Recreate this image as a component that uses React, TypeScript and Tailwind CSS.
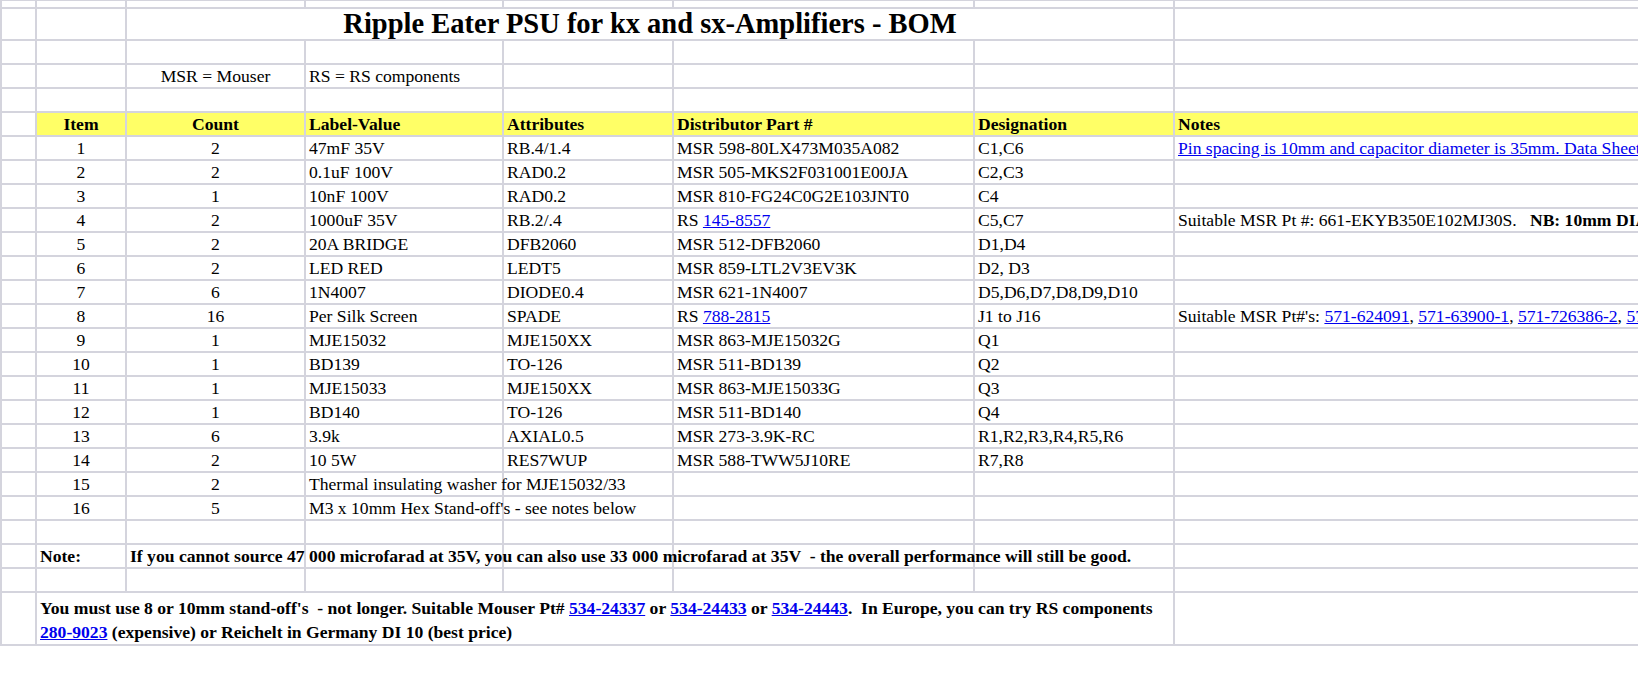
import React from 'react';

type Row = {
  item: string;
  count: string;
  label: string;
  attr?: string;
  part?: React.ReactNode;
  des?: string;
  notes?: React.ReactNode;
};

const A = ({ children }: { children: React.ReactNode }) => (
  <a href="#" className="text-[#0000ee] underline">
    {children}
  </a>
);

const rows: Row[] = [
  {
    item: '1',
    count: '2',
    label: '47mF 35V',
    attr: 'RB.4/1.4',
    part: 'MSR 598-80LX473M035A082',
    des: 'C1,C6',
    notes: <A>Pin spacing is 10mm and capacitor diameter is 35mm. Data Sheet here</A>,
  },
  { item: '2', count: '2', label: '0.1uF 100V', attr: 'RAD0.2', part: 'MSR 505-MKS2F031001E00JA', des: 'C2,C3' },
  { item: '3', count: '1', label: '10nF 100V', attr: 'RAD0.2', part: 'MSR 810-FG24C0G2E103JNT0', des: 'C4' },
  {
    item: '4',
    count: '2',
    label: '1000uF 35V',
    attr: 'RB.2/.4',
    part: (
      <>
        RS <A>145-8557</A>
      </>
    ),
    des: 'C5,C7',
    notes: (
      <>
        Suitable MSR Pt #: 661-EKYB350E102MJ30S.{'   '}
        <b>NB: 10mm DIAMETER</b>
      </>
    ),
  },
  { item: '5', count: '2', label: '20A BRIDGE', attr: 'DFB2060', part: 'MSR 512-DFB2060', des: 'D1,D4' },
  { item: '6', count: '2', label: 'LED RED', attr: 'LEDT5', part: 'MSR 859-LTL2V3EV3K', des: 'D2, D3' },
  { item: '7', count: '6', label: '1N4007', attr: 'DIODE0.4', part: 'MSR 621-1N4007', des: 'D5,D6,D7,D8,D9,D10' },
  {
    item: '8',
    count: '16',
    label: 'Per Silk Screen',
    attr: 'SPADE',
    part: (
      <>
        RS <A>788-2815</A>
      </>
    ),
    des: 'J1 to J16',
    notes: (
      <>
        Suitable MSR Pt#'s: <A>571-624091</A>, <A>571-63900-1</A>, <A>571-726386-2</A>, <A>571-726386-1</A>
      </>
    ),
  },
  { item: '9', count: '1', label: 'MJE15032', attr: 'MJE150XX', part: 'MSR 863-MJE15032G', des: 'Q1' },
  { item: '10', count: '1', label: 'BD139', attr: 'TO-126', part: 'MSR 511-BD139', des: 'Q2' },
  { item: '11', count: '1', label: 'MJE15033', attr: 'MJE150XX', part: 'MSR 863-MJE15033G', des: 'Q3' },
  { item: '12', count: '1', label: 'BD140', attr: 'TO-126', part: 'MSR 511-BD140', des: 'Q4' },
  { item: '13', count: '6', label: '3.9k', attr: 'AXIAL0.5', part: 'MSR 273-3.9K-RC', des: 'R1,R2,R3,R4,R5,R6' },
  { item: '14', count: '2', label: '10 5W', attr: 'RES7WUP', part: 'MSR 588-TWW5J10RE', des: 'R7,R8' },
  { item: '15', count: '2', label: 'Thermal insulating washer for MJE15032/33' },
  { item: '16', count: '5', label: "M3 x 10mm Hex Stand-off's - see notes below" },
];

const td = 'border-2 border-[#d4d4dd] px-[3px] py-0 whitespace-pre overflow-visible';
const hd = td + ' bg-[#ffff66] font-bold';

const App: React.FC = () => {
  return (
    <div className="w-full h-[673px] overflow-hidden bg-white">
      <table className="table-fixed border-collapse w-[1800px] -mt-[1px] text-[17.6px] leading-[20px] text-black font-['Liberation_Serif','Times_New_Roman',serif]">
        <colgroup>
          <col className="w-[35px]" />
          <col className="w-[90px]" />
          <col className="w-[179px]" />
          <col className="w-[198px]" />
          <col className="w-[170px]" />
          <col className="w-[301px]" />
          <col className="w-[200px]" />
          <col className="w-[627px]" />
        </colgroup>
        <tbody>
          <tr className="h-[8px]">
            {Array.from({ length: 8 }).map((_, i) => (
              <td key={i} className={td} />
            ))}
          </tr>
          <tr className="h-[32px]">
            <td className={td} />
            <td className={td} />
            <td className={td + ' text-center text-[28.5px] font-bold'} colSpan={5}>
              Ripple Eater PSU for kx and sx-Amplifiers - BOM
            </td>
            <td className={td} />
          </tr>
          <tr className="h-[24px]">
            {Array.from({ length: 8 }).map((_, i) => (
              <td key={i} className={td} />
            ))}
          </tr>
          <tr className="h-[24px]">
            <td className={td} />
            <td className={td} />
            <td className={td + ' text-center'}>MSR = Mouser</td>
            <td className={td}>RS = RS components</td>
            <td className={td} />
            <td className={td} />
            <td className={td} />
            <td className={td} />
          </tr>
          <tr className="h-[24px]">
            {Array.from({ length: 8 }).map((_, i) => (
              <td key={i} className={td} />
            ))}
          </tr>
          <tr className="h-[24px]">
            <td className={td} />
            <td className={hd + ' text-center'}>Item</td>
            <td className={hd + ' text-center'}>Count</td>
            <td className={hd}>Label-Value</td>
            <td className={hd}>Attributes</td>
            <td className={hd}>Distributor Part #</td>
            <td className={hd}>Designation</td>
            <td className={hd}>Notes</td>
          </tr>
          {rows.map((r) => (
            <tr key={r.item} className="h-[24px]">
              <td className={td} />
              <td className={td + ' text-center'}>{r.item}</td>
              <td className={td + ' text-center'}>{r.count}</td>
              <td className={td}>{r.label}</td>
              <td className={td}>{r.attr}</td>
              <td className={td}>{r.part}</td>
              <td className={td}>{r.des}</td>
              <td className={td}>{r.notes}</td>
            </tr>
          ))}
          <tr className="h-[24px]">
            {Array.from({ length: 8 }).map((_, i) => (
              <td key={i} className={td} />
            ))}
          </tr>
          <tr className="h-[24px] font-bold">
            <td className={td} />
            <td className={td}>Note:</td>
            <td className={td}>
              If you cannot source 47 000 microfarad at 35V, you can also use 33 000 microfarad at 35V  - the overall
              performance will still be good.
            </td>
            <td className={td} />
            <td className={td} />
            <td className={td} />
            <td className={td} />
            <td className={td} />
          </tr>
          <tr className="h-[24px]">
            {Array.from({ length: 8 }).map((_, i) => (
              <td key={i} className={td} />
            ))}
          </tr>
          <tr className="h-[51px] font-bold">
            <td className={td} />
            <td className={td + ' align-top pt-[3px] leading-[24px]'} colSpan={6}>
              You must use 8 or 10mm stand-off's  - not longer. Suitable Mouser Pt# <A>534-24337</A> or{' '}
              <A>534-24433</A> or <A>534-24443</A>.  In Europe, you can try RS components
              <br />
              <A>280-9023</A> (expensive) or Reichelt in Germany DI 10 (best price)
            </td>
            <td className={td} />
          </tr>
        </tbody>
      </table>
    </div>
  );
};

export default App;
